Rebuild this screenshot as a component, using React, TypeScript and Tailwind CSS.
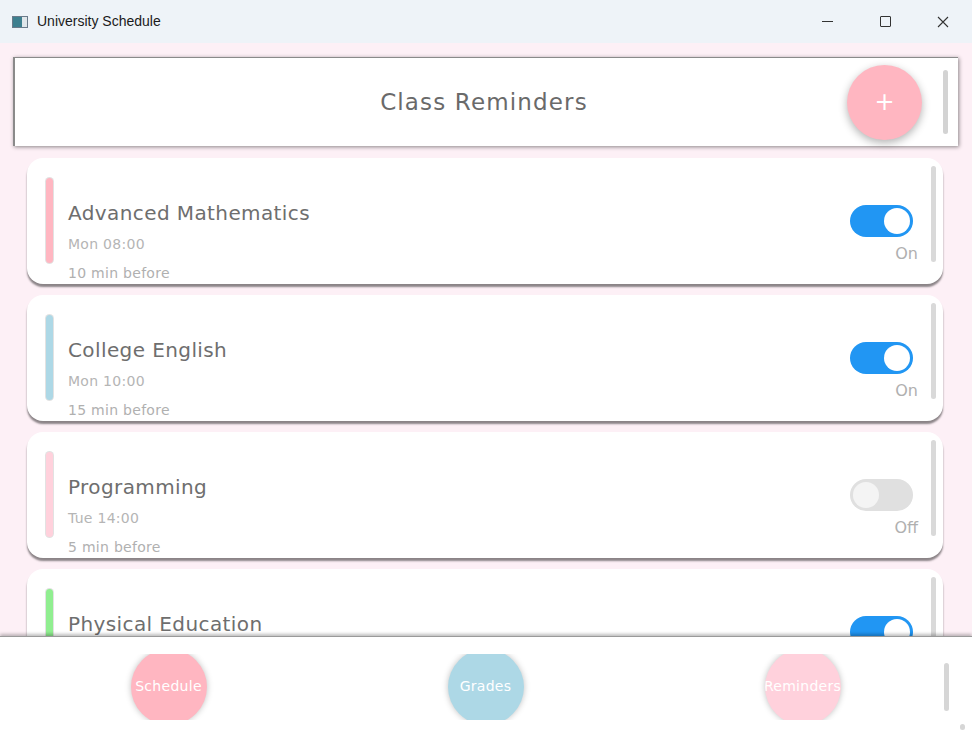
import React from "react";

type Reminder = {
  name: string;
  time: string;
  before: string;
  color: string;
  on: boolean;
};

const reminders: Reminder[] = [
  { name: "Advanced Mathematics", time: "Mon 08:00", before: "10 min before", color: "bg-[#ffb6c1]", on: true },
  { name: "College English", time: "Mon 10:00", before: "15 min before", color: "bg-[#add8e6]", on: true },
  { name: "Programming", time: "Tue 14:00", before: "5 min before", color: "bg-[#ffd1dc]", on: false },
  { name: "Physical Education", time: "Wed 09:00", before: "10 min before", color: "bg-[#90ee90]", on: true },
];

const font = "font-['DejaVu_Sans',sans-serif]";

function Toggle({ on }: { on: boolean }) {
  return (
    <div
      className={`w-[63px] h-[32px] rounded-full flex items-center px-[3px] ${
        on ? "bg-[#2196f3] justify-end" : "bg-[#e0e0e0] justify-start"
      }`}
    >
      <div className={`w-[26px] h-[26px] rounded-full ${on ? "bg-white" : "bg-[#f4f4f4]"}`} />
    </div>
  );
}

function ReminderCard({ r }: { r: Reminder }) {
  return (
    <div className="h-[126px] shrink-0 bg-white rounded-[16px] shadow-[0_3px_2px_rgba(0,0,0,0.45)] flex items-stretch overflow-hidden">
      <div className="pl-[19px] pt-[20px] pb-[21px] flex">
        <div className={`w-[7px] rounded-full ${r.color} ring-1 ring-[#e2e2e2]`} />
      </div>
      <div className="flex-1 pl-[15px] pt-[43px] flex flex-col">
        <div className="text-[20px] leading-[24px] tracking-[0.02em] text-[#6e6e6e]">{r.name}</div>
        <div className="text-[14px] leading-[18px] mt-[10px] tracking-[0.02em] text-[#b5b5b5]">{r.time}</div>
        <div className="text-[14px] leading-[18px] mt-[11px] tracking-[0.02em] text-[#b0b0b0]">{r.before}</div>
      </div>
      <div className="flex flex-col items-end pt-[47px] pr-[1px]">
        <Toggle on={r.on} />
        <div className="text-[16px] leading-[18px] mt-[8px] mr-[-5px] text-[#b0b0b0]">{r.on ? "On" : "Off"}</div>
      </div>
      <div className="pl-[17px] pr-[7px] pt-[8px] pb-[22px] flex">
        <div className="w-[5px] rounded-full bg-[#d9d9d9]" />
      </div>
    </div>
  );
}

export default function App() {
  return (
    <div className={`w-[972px] h-[736px] flex flex-col bg-[#fdf0f6] overflow-hidden ${font}`}>
      {/* title bar */}
      <div className="h-[43px] shrink-0 bg-[#eef3f8] flex items-center font-['Liberation_Sans',sans-serif]">
        <div className="ml-[12px] w-[16px] h-[12px] border border-[#6a7a8a] bg-[#dfe6ea] flex">
          <div className="w-[9px] bg-[#3d7f8f]" />
        </div>
        <span className="ml-[9px] text-[14px] text-[#1a1a1a]">University Schedule</span>
        <div className="ml-auto flex items-center text-[#222]">
          <div className="w-[58px] flex justify-center">
            <div className="w-[11px] h-[1px] bg-[#333]" />
          </div>
          <div className="w-[58px] flex justify-center">
            <div className="w-[11px] h-[11px] border border-[#333] rounded-[1px]" />
          </div>
          <div className="w-[58px] flex justify-center">
            <svg width="12" height="12" viewBox="0 0 12 12">
              <path d="M1 1L11 11M11 1L1 11" stroke="#333" strokeWidth="1.1" />
            </svg>
          </div>
        </div>
      </div>

      {/* header */}
      <div className="mt-[14px] ml-[13px] mr-[14px] h-[89px] shrink-0 bg-white border-l-2 border-t border-[#8a8a8a] shadow-[1px_1px_4px_rgba(0,0,0,0.45)] flex items-center">
        <div className="flex-1 text-center text-[23px] tracking-[0.05em] text-[#6a6a6a] pl-[106px]">Class Reminders</div>
        <div className="w-[75px] h-[75px] rounded-full bg-[#ffb6c1] shadow-[0_3px_8px_rgba(0,0,0,0.3)] flex items-center justify-center text-white text-[24px]">
          +
        </div>
        <div className="ml-[21px] mr-[10px] w-[5px] h-[64px] rounded-full bg-[#d3d3d3]" />
      </div>

      {/* list */}
      <div className="flex-1 min-h-0 overflow-hidden flex flex-col gap-[11px] pt-[12px] pl-[27px] pr-[29px]">
        {reminders.map((r) => (
          <ReminderCard key={r.name} r={r} />
        ))}
      </div>

      {/* bottom nav */}
      <div className="h-[100px] shrink-0 bg-white border-t border-[#9a9a9a] shadow-[0_-2px_3px_rgba(0,0,0,0.25)] flex items-center relative">
        <div className="flex-1 grid grid-cols-3 pl-[10px] pr-[11px] h-[66px]">
          {[
            { label: "Schedule", c: "bg-[#ffb6c1]" },
            { label: "Grades", c: "bg-[#add8e6]" },
            { label: "Reminders", c: "bg-[#ffd1dc]" },
          ].map((b) => (
            <div key={b.label} className="flex justify-center overflow-hidden">
              <div className={`w-[76px] h-[76px] -mt-[5px] shrink-0 rounded-full ${b.c} shadow-[0_0_6px_rgba(0,0,0,0.25)] flex items-center justify-center overflow-hidden`}>
                <span className="text-white text-[14px] tracking-[0.02em] whitespace-nowrap">{b.label}</span>
              </div>
            </div>
          ))}
        </div>
        <div className="absolute right-[23px] top-[26px] w-[5px] h-[48px] rounded-full bg-[#d6d6d6]" />
        <div className="absolute right-[7px] bottom-[6px] w-[5px] h-[6px] rounded-full bg-[#d6d6d6]" />
      </div>
    </div>
  );
}
